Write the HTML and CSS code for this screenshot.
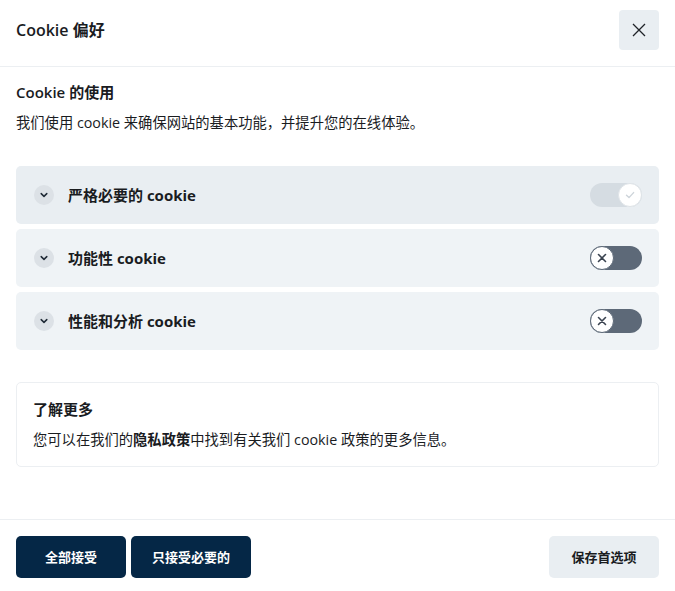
FILE: index.html
```html
<!DOCTYPE html>
<html lang="zh-CN">
<head>
<meta charset="utf-8">
<title>Cookie 偏好</title>
<link rel="stylesheet" href="styles.css">
</head>
<body>
<div class="dialog">
  <header class="header">
    <h1 class="title">Cookie 偏好</h1>
    <button class="close" aria-label="关闭">
      <svg width="14" height="14" viewBox="0 0 14 14"><path d="M1 1L13 13M13 1L1 13" stroke="#1f2328" stroke-width="1.3" fill="none"/></svg>
    </button>
  </header>

  <main class="content">
    <h2 class="section-title">Cookie 的使用</h2>
    <p class="desc">我们使用 cookie 来确保网站的基本功能，并提升您的在线体验。</p>

    <div class="rows">
      <div class="row row-active">
        <span class="chev"><svg width="10" height="10" viewBox="0 0 10 10"><path d="M2.2 3.6L5 6.4L7.8 3.6" stroke="#1f2a36" stroke-width="1.5" fill="none" stroke-linecap="round" stroke-linejoin="round"/></svg></span>
        <span class="row-label">严格必要的 cookie</span>
        <span class="toggle toggle-on">
          <span class="knob"><svg width="12" height="12" viewBox="0 0 12 12"><path d="M2.5 6.3L5 8.6L9.6 3.6" stroke="#cdd4da" stroke-width="1.4" fill="none" stroke-linecap="round" stroke-linejoin="round"/></svg></span>
        </span>
      </div>
      <div class="row">
        <span class="chev"><svg width="10" height="10" viewBox="0 0 10 10"><path d="M2.2 3.6L5 6.4L7.8 3.6" stroke="#1f2a36" stroke-width="1.5" fill="none" stroke-linecap="round" stroke-linejoin="round"/></svg></span>
        <span class="row-label">功能性 cookie</span>
        <span class="toggle toggle-off">
          <span class="knob"><svg width="12" height="12" viewBox="0 0 12 12"><path d="M2.5 2.5L9.5 9.5M9.5 2.5L2.5 9.5" stroke="#3a4350" stroke-width="1.6" fill="none" stroke-linecap="round"/></svg></span>
        </span>
      </div>
      <div class="row">
        <span class="chev"><svg width="10" height="10" viewBox="0 0 10 10"><path d="M2.2 3.6L5 6.4L7.8 3.6" stroke="#1f2a36" stroke-width="1.5" fill="none" stroke-linecap="round" stroke-linejoin="round"/></svg></span>
        <span class="row-label">性能和分析 cookie</span>
        <span class="toggle toggle-off">
          <span class="knob"><svg width="12" height="12" viewBox="0 0 12 12"><path d="M2.5 2.5L9.5 9.5M9.5 2.5L2.5 9.5" stroke="#3a4350" stroke-width="1.6" fill="none" stroke-linecap="round"/></svg></span>
        </span>
      </div>
    </div>

    <section class="more">
      <h3 class="more-title">了解更多</h3>
      <p class="more-text">您可以在我们的<strong>隐私政策</strong>中找到有关我们 cookie 政策的更多信息。</p>
    </section>
  </main>

  <footer class="footer">
    <div class="btn-group">
      <button class="btn btn-dark">全部接受</button>
      <button class="btn btn-dark">只接受必要的</button>
    </div>
    <button class="btn btn-light">保存首选项</button>
  </footer>
</div>
</body>
</html>
```

FILE: styles.css
```css
* { box-sizing: border-box; }

html, body {
  margin: 0;
  padding: 0;
  background: #ffffff;
}

body {
  font-family: "Open Sans", "Noto Sans CJK SC", sans-serif;
  color: #1a1c1f;
}

.dialog {
  width: 675px;
  height: 591px;
  display: flex;
  flex-direction: column;
}

.header {
  display: flex;
  align-items: center;
  justify-content: space-between;
  padding: 10px 16px 16px 16px;
  border-bottom: 1px solid #eceff2;
}

.title {
  margin: 0;
  font-size: 16px;
  font-weight: 600;
  line-height: 24px;
}

.close {
  width: 40px;
  height: 40px;
  border: none;
  border-radius: 4px;
  background: #e9eef2;
  display: flex;
  align-items: center;
  justify-content: center;
  padding: 0;
}

.content {
  padding: 15px 16px 0 16px;
}

.section-title {
  margin: 0;
  font-size: 15px;
  font-weight: 600;
  line-height: 20px;
}

.desc {
  margin: 11px 0 0 0;
  font-size: 14.3px;
  line-height: 20px;
}

.rows {
  margin-top: 33px;
  display: flex;
  flex-direction: column;
  gap: 5px;
}

.row {
  height: 58px;
  border-radius: 5px;
  background: #eff3f6;
  display: flex;
  align-items: center;
  padding: 0 17px 0 18px;
}

.row-active {
  background: #e9eef2;
}

.chev {
  width: 20px;
  height: 20px;
  border-radius: 50%;
  background: #dce1e6;
  display: flex;
  align-items: center;
  justify-content: center;
  flex: none;
}

.row-label {
  margin-left: 14px;
  flex: 1;
  font-size: 15px;
  font-weight: 700;
  line-height: 20px;
}

.toggle {
  width: 52px;
  height: 24px;
  border-radius: 12px;
  display: flex;
  align-items: center;
  flex: none;
}

.toggle-on {
  background: #d5dce2;
  justify-content: flex-end;
}

.toggle-off {
  background: #5d6978;
  justify-content: flex-start;
}

.knob {
  width: 24px;
  height: 24px;
  border-radius: 50%;
  background: #ffffff;
  display: flex;
  align-items: center;
  justify-content: center;
}

.toggle-on .knob {
  border: 1px solid #dfe4e8;
}

.toggle-off .knob {
  border: 1.5px solid #5d6978;
}

.more {
  margin-top: 32px;
  border: 1px solid #eceff2;
  border-radius: 5px;
  padding: 16px 16px 16px 16px;
}

.more-title {
  margin: 0;
  font-size: 15px;
  font-weight: 600;
  line-height: 20px;
}

.more-text {
  margin: 11px 0 0 0;
  font-size: 14.3px;
  line-height: 20px;
}

.more-text strong {
  font-weight: 700;
}

.footer {
  margin-top: auto;
  margin-bottom: 13px;
  border-top: 1px solid #eceff2;
  padding: 16px 16px 0 16px;
  display: flex;
  justify-content: space-between;
  align-items: center;
}

.btn-group {
  display: flex;
  gap: 5px;
}

.btn {
  height: 42px;
  min-width: 110px;
  padding: 0 21px;
  border: none;
  border-radius: 5px;
  font-family: "Open Sans", "Noto Sans CJK SC", sans-serif;
  font-size: 13px;
  font-weight: 700;
  line-height: 20px;
}

.btn-dark {
  background: #052746;
  color: #ffffff;
}

.btn-light {
  background: #e9eef2;
  color: #1a1c1f;
}
```
